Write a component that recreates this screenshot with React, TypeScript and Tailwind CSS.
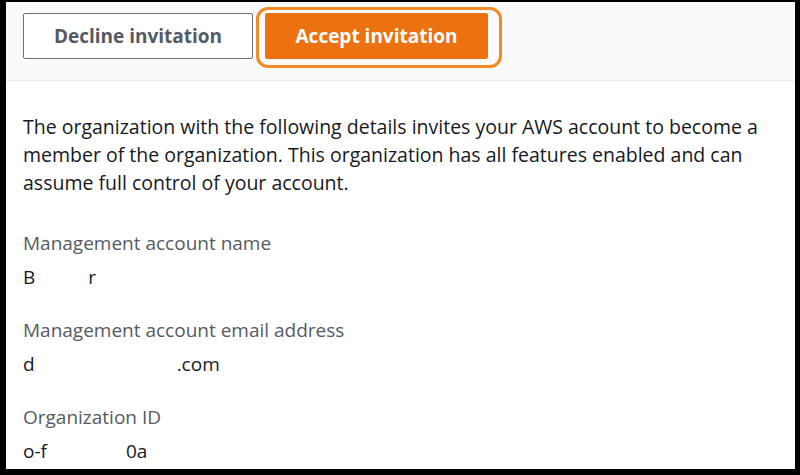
import React from "react";

export default function App() {
  return (
    <div className="w-[800px] h-[475px] bg-black pt-[2px] pl-[6px] pr-[5px] pb-[6px]" style={{ fontFamily: '"Open Sans", "Noto Sans", sans-serif' }}>
      <div className="w-full h-full bg-white flex flex-col overflow-hidden">
        <div className="relative h-[79px] bg-[#fafafa] border-b border-[#eaeded] flex items-start pt-[11px] pl-[17px] gap-[12px]">
          <button className="w-[230px] h-[46px] border border-[#687078] rounded-[2px] bg-white text-[#545b64] font-bold text-[19px] flex items-center justify-center">
            Decline invitation
          </button>
          <button className="w-[223px] h-[46px] bg-[#ec7211] rounded-[2px] text-white font-bold text-[19px] flex items-center justify-center">
            Accept invitation
          </button>
          <div className="absolute left-[250px] top-[5px] w-[246px] h-[61px] border-[3px] border-[#f28a27] rounded-[12px]" />
        </div>
        <div className="pl-[17px] pr-[20px] pt-[32px] text-[19px] text-[#16191f]">
          <p className="leading-[28px] text-[19.5px]">
            The organization with the following details invites your AWS account to become a member of the organization. This organization has all features enabled and can assume full control of your account.
          </p>
          <div className="mt-[32px] flex flex-col">
            <div className="text-[#545b64] leading-[28px]">Management account name</div>
            <div className="leading-[28px] mt-[6px] flex"><span>B</span><span className="ml-[53px]">r</span></div>
            <div className="text-[#545b64] leading-[28px] mt-[25px]">Management account email address</div>
            <div className="leading-[28px] mt-[6px] flex"><span>d</span><span className="ml-[142px]">.com</span></div>
            <div className="text-[#545b64] leading-[28px] mt-[25px]">Organization ID</div>
            <div className="leading-[28px] mt-[6px] flex"><span>o-f</span><span className="ml-[79px]">0a</span></div>
          </div>
        </div>
      </div>
    </div>
  );
}
